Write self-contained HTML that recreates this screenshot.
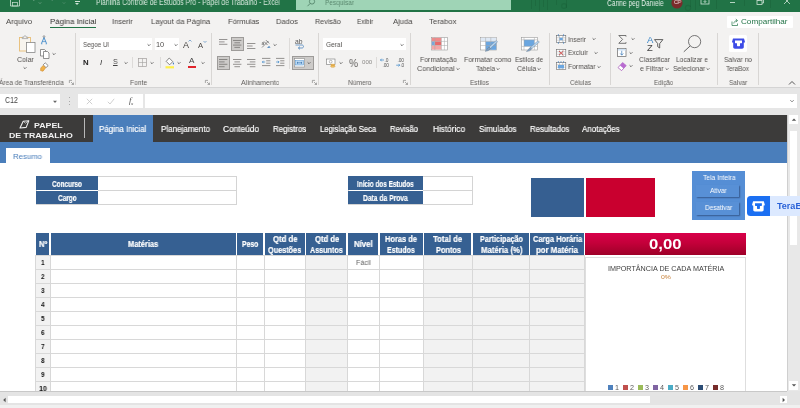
<!DOCTYPE html>
<html>
<head>
<meta charset="utf-8">
<title>Excel</title>
<style>
html,body{margin:0;padding:0;}
body{width:800px;height:408px;overflow:hidden;position:relative;background:#fff;font-family:"Liberation Sans",sans-serif;color:#444;}
div,span{box-sizing:border-box;}
.a{position:absolute;}
.t{position:absolute;white-space:nowrap;line-height:1;will-change:transform;}
svg{overflow:visible;}
</style>
</head>
<body>
<div class="a" style="left:0.00px;top:0.00px;width:800.00px;height:12.30px;background:#217346;"></div>
<div class="a" style="left:296.25px;top:0.00px;width:215.00px;height:9.50px;background:#9fd4b6;"></div>
<div class="a" style="left:0.00px;top:12.30px;width:800.00px;height:75.20px;background:#f3f2f1;"></div>
<div class="a" style="left:0.00px;top:87.50px;width:800.00px;height:27.00px;background:#e6e6e6;"></div>
<div class="a" style="left:0.00px;top:87.00px;width:800.00px;height:1.00px;background:#d4d4d4;"></div>
<div class="a" style="left:0.00px;top:114.70px;width:786.60px;height:27.80px;background:#3c3b3a;"></div>
<div class="a" style="left:0.00px;top:142.40px;width:786.60px;height:20.30px;background:#4a7ebb;"></div>
<div class="a" style="left:93.00px;top:114.70px;width:60.00px;height:28.30px;background:#4a7ebb;"></div>
<div class="a" style="left:5.50px;top:148.00px;width:44.00px;height:15.20px;background:#ffffff;"></div>
<div class="a" style="left:531.00px;top:0.00px;width:1.20px;height:9.00px;background:rgba(10,60,30,0.16);"></div>
<div class="a" style="left:535.00px;top:0.00px;width:1.20px;height:6.00px;background:rgba(10,60,30,0.16);"></div>
<div class="a" style="left:539.00px;top:0.00px;width:1.20px;height:11.00px;background:rgba(10,60,30,0.16);"></div>
<div class="a" style="left:543.00px;top:0.00px;width:1.20px;height:7.00px;background:rgba(10,60,30,0.16);"></div>
<div class="a" style="left:547.00px;top:0.00px;width:1.20px;height:10.00px;background:rgba(10,60,30,0.16);"></div>
<div class="a" style="left:556.00px;top:0.00px;width:1.20px;height:5.00px;background:rgba(10,60,30,0.16);"></div>
<div class="a" style="left:566.00px;top:0.00px;width:1.20px;height:8.00px;background:rgba(10,60,30,0.16);"></div>
<div class="a" style="left:690.00px;top:0.00px;width:1.20px;height:7.00px;background:rgba(10,60,30,0.16);"></div>
<div class="a" style="left:694.50px;top:0.00px;width:1.20px;height:10.00px;background:rgba(10,60,30,0.16);"></div>
<div class="a" style="left:699.00px;top:0.00px;width:1.20px;height:6.00px;background:rgba(10,60,30,0.16);"></div>
<div class="a" style="left:716.00px;top:0.00px;width:1.20px;height:9.00px;background:rgba(10,60,30,0.16);"></div>
<div class="a" style="left:744.00px;top:0.00px;width:1.20px;height:6.00px;background:rgba(10,60,30,0.16);"></div>
<div class="a" style="left:770.00px;top:0.00px;width:1.20px;height:8.00px;background:rgba(10,60,30,0.16);"></div>
<svg class="a" style="left:684.00px;top:4.00px;" width="8" height="8" viewBox="0 0 8 8"><circle cx="4" cy="4" r="2.6" fill="none" stroke="rgba(10,60,30,0.16)" stroke-width="1.1"/></svg>
<svg class="a" style="left:560.00px;top:2.00px;" width="8" height="8" viewBox="0 0 8 8"><circle cx="4" cy="4" r="2.4" fill="none" stroke="rgba(10,60,30,0.14)" stroke-width="1.1"/></svg>
<div class="t" style="left:95.75px;top:-0.70px;font-size:8.20px;color:#d7e8dd;transform:scaleX(0.8299);transform-origin:0 0;">Planilha Controle de Estudos Pro - Papel de Trabalho  -  Excel</div>
<div class="t" style="left:325.00px;top:-0.70px;font-size:8.00px;color:#5c8a70;transform:scaleX(0.8152);transform-origin:0 0;">Pesquisar</div>
<svg class="a" style="left:306.00px;top:-2.00px;" width="10" height="10" viewBox="0 0 10 10"><circle cx="6" cy="3.5" r="2.6" fill="none" stroke="#4d7c63" stroke-width="0.8"/><path d="M4.2 5.4 L1.5 8.2" stroke="#4d7c63" stroke-width="0.8"/></svg>
<div class="t" style="left:607.00px;top:-0.50px;font-size:8.20px;color:#e6f0ea;transform:scaleX(0.8084);transform-origin:0 0;">Carine peg Daniele</div>
<svg class="a" style="left:671.30px;top:-3.40px;" width="12" height="12" viewBox="0 0 12 12"><circle cx="6" cy="6" r="5.6" fill="#7a2b2b"/></svg>
<div class="t" style="left:673.80px;top:0.20px;font-size:5.60px;color:#f3e4e4;transform:scaleX(0.9255);transform-origin:0 0;">CP</div>
<svg class="a" style="left:700.00px;top:-0.60px;" width="10" height="8" viewBox="0 0 10 8"><rect x="1" y="-1" width="8" height="6" fill="none" stroke="#cfe3d6" stroke-width="0.8"/><path d="M5 0 L5 3.4 M3.6 2 L5 3.6 L6.4 2" stroke="#cfe3d6" stroke-width="0.7" fill="none"/></svg>
<div class="a" style="left:729.60px;top:2.20px;width:5.40px;height:0.70px;background:#b5d4c2;"></div>
<svg class="a" style="left:755.00px;top:-0.40px;" width="10" height="8" viewBox="0 0 10 8"><rect x="2" y="0.5" width="5" height="4" fill="none" stroke="#cfe3d6" stroke-width="0.8"/><path d="M3.5 0.5 L3.5 -1 L8.5 -1 L8.5 3 L7 3" fill="none" stroke="#cfe3d6" stroke-width="0.8"/></svg>
<svg class="a" style="left:781.70px;top:-0.60px;" width="10" height="8" viewBox="0 0 10 8"><path d="M2 -1 L8 5 M8 -1 L2 5" stroke="#cfe3d6" stroke-width="0.8"/></svg>
<svg class="a" style="left:10.00px;top:-3.00px;" width="10" height="10" viewBox="0 0 10 10"><path d="M0.5 0 H8 L9.5 1.5 V9 H0.5 Z" fill="none" stroke="#cfe3d6" stroke-width="0.8"/><rect x="2.5" y="5.5" width="5" height="3.5" fill="none" stroke="#cfe3d6" stroke-width="0.7"/></svg>
<svg class="a" style="left:26.00px;top:-3.00px;" width="10" height="8" viewBox="0 0 10 8"><path d="M1 3 C3 0,7 0,8 4" fill="none" stroke="#7fae93" stroke-width="0.8"/></svg>
<svg class="a" style="left:37.00px;top:0.00px;" width="6" height="6" viewBox="0 0 6 6"><path d="M1.8 2.4 L3 3.6 L4.2 2.4" fill="none" stroke="#7fae93" stroke-width="0.7"/></svg>
<svg class="a" style="left:50.00px;top:-3.00px;" width="10" height="8" viewBox="0 0 10 8"><path d="M9 3 C7 0,3 0,2 4" fill="none" stroke="#5f977a" stroke-width="0.8"/></svg>
<svg class="a" style="left:61.00px;top:0.00px;" width="6" height="6" viewBox="0 0 6 6"><path d="M1.8 2.4 L3 3.6 L4.2 2.4" fill="none" stroke="#5f977a" stroke-width="0.7"/></svg>
<div class="a" style="left:74.50px;top:1.20px;width:5.00px;height:0.80px;background:#cfe3d6;"></div>
<svg class="a" style="left:74.00px;top:2.00px;" width="6" height="4" viewBox="0 0 6 4"><path d="M1 1 L3 3 L5 1 Z" fill="#cfe3d6"/></svg>
<div class="t" style="left:6.00px;top:18.40px;font-size:8.00px;color:#484644;transform:scaleX(0.9585);transform-origin:0 0;">Arquivo</div>
<div class="t" style="left:49.50px;top:18.40px;font-size:8.00px;color:#323130;transform:scaleX(0.9771);transform-origin:0 0;">Página Inicial</div>
<div class="a" style="left:49.50px;top:27.00px;width:46.50px;height:1.30px;background:#217346;"></div>
<div class="t" style="left:112.25px;top:18.40px;font-size:8.00px;color:#484644;transform:scaleX(0.9335);transform-origin:0 0;">Inserir</div>
<div class="t" style="left:150.75px;top:18.40px;font-size:8.00px;color:#484644;transform:scaleX(0.9514);transform-origin:0 0;">Layout da Página</div>
<div class="t" style="left:228.00px;top:18.40px;font-size:8.00px;color:#484644;transform:scaleX(0.9373);transform-origin:0 0;">Fórmulas</div>
<div class="t" style="left:276.25px;top:18.40px;font-size:8.00px;color:#484644;transform:scaleX(0.9405);transform-origin:0 0;">Dados</div>
<div class="t" style="left:314.50px;top:18.40px;font-size:8.00px;color:#484644;transform:scaleX(0.8909);transform-origin:0 0;">Revisão</div>
<div class="t" style="left:357.00px;top:18.40px;font-size:8.00px;color:#484644;transform:scaleX(0.8123);transform-origin:0 0;">Exibir</div>
<div class="t" style="left:392.50px;top:18.40px;font-size:8.00px;color:#484644;transform:scaleX(0.9530);transform-origin:0 0;">Ajuda</div>
<div class="t" style="left:428.75px;top:18.40px;font-size:8.00px;color:#484644;transform:scaleX(0.9662);transform-origin:0 0;">Terabox</div>
<div class="a" style="left:727.40px;top:16.00px;width:65.60px;height:11.60px;background:#ffffff;border-radius:1px;"></div>
<div class="t" style="left:740.50px;top:18.30px;font-size:7.80px;color:#217346;transform:scaleX(1.0414);transform-origin:0 0;">Compartilhar</div>
<svg class="a" style="left:730.50px;top:17.50px;" width="8" height="8" viewBox="0 0 8 8"><path d="M1 3.5 V7.5 H6.5 V5.5" fill="none" stroke="#217346" stroke-width="0.7"/><path d="M2.8 5.5 C3 3.5,4.5 2.6,6 2.6 M4.8 1 L6.6 2.6 L4.8 4.2" fill="none" stroke="#217346" stroke-width="0.7"/></svg>
<div class="t" style="left:-1.00px;top:78.80px;font-size:7.20px;color:#605e5c;transform:scaleX(0.9175);transform-origin:0 0;">Área de Transferência</div>
<svg class="a" style="left:68.50px;top:80.00px;" width="5" height="5" viewBox="0 0 5 5"><path d="M0.4 3 V0.4 H3" fill="none" stroke="#777" stroke-width="0.6"/><path d="M2 2 L4.4 4.4 M4.5 2.6 V4.5 H2.6" fill="none" stroke="#777" stroke-width="0.6"/></svg>
<div class="a" style="left:74.60px;top:32.50px;width:0.80px;height:52.50px;background:#d8d6d4;"></div>
<div class="t" style="left:130.00px;top:78.80px;font-size:7.20px;color:#605e5c;transform:scaleX(0.9233);transform-origin:0 0;">Fonte</div>
<svg class="a" style="left:204.50px;top:80.00px;" width="5" height="5" viewBox="0 0 5 5"><path d="M0.4 3 V0.4 H3" fill="none" stroke="#777" stroke-width="0.6"/><path d="M2 2 L4.4 4.4 M4.5 2.6 V4.5 H2.6" fill="none" stroke="#777" stroke-width="0.6"/></svg>
<div class="a" style="left:211.35px;top:32.50px;width:0.80px;height:52.50px;background:#d8d6d4;"></div>
<div class="t" style="left:240.75px;top:78.80px;font-size:7.20px;color:#605e5c;transform:scaleX(0.9619);transform-origin:0 0;">Alinhamento</div>
<svg class="a" style="left:311.50px;top:80.00px;" width="5" height="5" viewBox="0 0 5 5"><path d="M0.4 3 V0.4 H3" fill="none" stroke="#777" stroke-width="0.6"/><path d="M2 2 L4.4 4.4 M4.5 2.6 V4.5 H2.6" fill="none" stroke="#777" stroke-width="0.6"/></svg>
<div class="a" style="left:317.60px;top:32.50px;width:0.80px;height:52.50px;background:#d8d6d4;"></div>
<div class="t" style="left:348.00px;top:78.80px;font-size:7.20px;color:#605e5c;transform:scaleX(0.9176);transform-origin:0 0;">Número</div>
<svg class="a" style="left:403.00px;top:80.00px;" width="5" height="5" viewBox="0 0 5 5"><path d="M0.4 3 V0.4 H3" fill="none" stroke="#777" stroke-width="0.6"/><path d="M2 2 L4.4 4.4 M4.5 2.6 V4.5 H2.6" fill="none" stroke="#777" stroke-width="0.6"/></svg>
<div class="a" style="left:410.10px;top:32.50px;width:0.80px;height:52.50px;background:#d8d6d4;"></div>
<div class="t" style="left:470.00px;top:78.80px;font-size:7.20px;color:#605e5c;transform:scaleX(0.8959);transform-origin:0 0;">Estilos</div>
<div class="a" style="left:548.60px;top:32.50px;width:0.80px;height:52.50px;background:#d8d6d4;"></div>
<div class="t" style="left:569.50px;top:78.80px;font-size:7.20px;color:#605e5c;transform:scaleX(0.8745);transform-origin:0 0;">Células</div>
<div class="a" style="left:609.60px;top:32.50px;width:0.80px;height:52.50px;background:#d8d6d4;"></div>
<div class="t" style="left:653.75px;top:78.80px;font-size:7.20px;color:#605e5c;transform:scaleX(0.8744);transform-origin:0 0;">Edição</div>
<div class="a" style="left:717.10px;top:32.50px;width:0.80px;height:52.50px;background:#d8d6d4;"></div>
<div class="t" style="left:728.75px;top:78.80px;font-size:7.20px;color:#605e5c;transform:scaleX(0.8942);transform-origin:0 0;">Salvar</div>
<div class="a" style="left:757.60px;top:32.50px;width:0.80px;height:52.50px;background:#d8d6d4;"></div>
<svg class="a" style="left:788.00px;top:80.00px;" width="8" height="6" viewBox="0 0 8 6"><path d="M1 4.5 L4 1.5 L7 4.5" fill="none" stroke="#444" stroke-width="0.9"/></svg>
<svg class="a" style="left:19.00px;top:35.00px;" width="17" height="18" viewBox="0 0 17 18"><rect x="0.5" y="2.5" width="11" height="13.5" fill="#f7f4ee" stroke="#e8bd74" stroke-width="0.9"/><path d="M3.2 3.6 V2.2 H4.8 C4.8 0.2,7.2 0.2,7.2 2.2 H8.8 V3.6 Z" fill="#f3f2f1" stroke="#8a8a8a" stroke-width="0.6"/><rect x="7.5" y="7.5" width="8.5" height="10" fill="#fff" stroke="#808080" stroke-width="0.75"/></svg>
<div class="t" style="left:17.00px;top:56.10px;font-size:7.60px;color:#53504e;transform:scaleX(0.9222);transform-origin:0 0;">Colar</div>
<svg class="a" style="left:21.50px;top:64.50px;" width="6" height="6" viewBox="0 0 6 6"><path d="M1.6 2.3 L3 3.7 L4.4 2.3" fill="none" stroke="#555" stroke-width="0.85"/></svg>
<svg class="a" style="left:40.00px;top:34.50px;" width="8" height="10" viewBox="0 0 8 10"><circle cx="4" cy="1.6" r="0.9" fill="none" stroke="#666" stroke-width="0.6"/><path d="M4 2.6 L1.4 8.6 M4 2.6 L6.6 8.6" stroke="#3a86c8" stroke-width="0.9" fill="none"/><path d="M2.2 6.6 H5.8" stroke="#3a86c8" stroke-width="0.7"/><path d="M1.2 8.8 H2.4 M5.6 8.8 H6.8" stroke="#3a86c8" stroke-width="0.8"/></svg>
<svg class="a" style="left:39.50px;top:48.50px;" width="10" height="10" viewBox="0 0 10 10"><path d="M0.5 0.5 H4.5 L6 2 V7 H0.5 Z" fill="#fff" stroke="#666" stroke-width="0.7"/><path d="M3.5 2.5 H7.5 L9 4 V9.5 H3.5 Z" fill="#fff" stroke="#666" stroke-width="0.7"/></svg>
<svg class="a" style="left:51.30px;top:50.50px;" width="6" height="6" viewBox="0 0 6 6"><path d="M1.6 2.3 L3 3.7 L4.4 2.3" fill="none" stroke="#555" stroke-width="0.85"/></svg>
<svg class="a" style="left:40.00px;top:62.00px;" width="9" height="10" viewBox="0 0 9 10"><path d="M5.2 0.8 L8.2 3.6 L6 5.6 L3.2 2.8 Z" fill="#fff" stroke="#666" stroke-width="0.7"/><path d="M3.2 3.4 L5.6 5.8 L3 9.2 L0.6 8.6 L0.8 6 Z" fill="#f0b24a" stroke="#d08a2a" stroke-width="0.6"/></svg>
<div class="a" style="left:80.40px;top:37.60px;width:72.00px;height:12.60px;background:#fff;"></div>
<div class="t" style="left:82.50px;top:41.00px;font-size:7.40px;color:#53504e;transform:scaleX(0.8508);transform-origin:0 0;">Segoe UI</div>
<svg class="a" style="left:146.00px;top:41.60px;" width="6" height="6" viewBox="0 0 6 6"><path d="M1.6 2.3 L3 3.7 L4.4 2.3" fill="none" stroke="#555" stroke-width="0.85"/></svg>
<div class="a" style="left:154.60px;top:37.60px;width:24.40px;height:12.60px;background:#fff;"></div>
<div class="t" style="left:155.60px;top:41.00px;font-size:7.40px;color:#53504e;transform:scaleX(0.9476);transform-origin:0 0;">10</div>
<svg class="a" style="left:172.50px;top:41.60px;" width="6" height="6" viewBox="0 0 6 6"><path d="M1.6 2.3 L3 3.7 L4.4 2.3" fill="none" stroke="#555" stroke-width="0.85"/></svg>
<div class="t" style="left:182.50px;top:40.70px;font-size:9.00px;color:#484644;transform:scaleX(0.9995);transform-origin:0 0;">A</div>
<svg class="a" style="left:188.00px;top:39.00px;" width="4" height="4" viewBox="0 0 4 4"><path d="M0.5 2.5 L2 1 L3.5 2.5" fill="none" stroke="#3a78b8" stroke-width="0.6"/></svg>
<div class="t" style="left:198.00px;top:42.00px;font-size:7.60px;color:#484644;transform:scaleX(0.9863);transform-origin:0 0;">A</div>
<svg class="a" style="left:202.50px;top:39.50px;" width="4" height="4" viewBox="0 0 4 4"><path d="M0.5 1 L2 2.5 L3.5 1" fill="none" stroke="#3a78b8" stroke-width="0.6"/></svg>
<div class="t" style="left:83.20px;top:58.50px;font-size:7.80px;color:#222;transform:scaleX(0.9941);transform-origin:0 0;font-weight:bold;">N</div>
<div class="t" style="left:99.80px;top:58.50px;font-size:7.80px;color:#333;transform:scaleX(0.9230);transform-origin:0 0;font-style:italic;">I</div>
<div class="t" style="left:112.80px;top:58.40px;font-size:7.60px;color:#444;transform:scaleX(0.9074);transform-origin:0 0;text-decoration:underline;">S</div>
<svg class="a" style="left:122.50px;top:59.50px;" width="6" height="6" viewBox="0 0 6 6"><path d="M1.6 2.3 L3 3.7 L4.4 2.3" fill="none" stroke="#555" stroke-width="0.85"/></svg>
<div class="a" style="left:131.50px;top:56.50px;width:0.80px;height:11.50px;background:#dddbd9;"></div>
<svg class="a" style="left:137.50px;top:58.00px;" width="9" height="9" viewBox="0 0 9 9"><rect x="0.5" y="0.5" width="8" height="8" fill="none" stroke="#a19f9d" stroke-width="0.7"/><path d="M4.5 0.5 V8.5 M0.5 4.5 H8.5" stroke="#a19f9d" stroke-width="0.6"/></svg>
<svg class="a" style="left:149.30px;top:59.50px;" width="6" height="6" viewBox="0 0 6 6"><path d="M1.6 2.3 L3 3.7 L4.4 2.3" fill="none" stroke="#555" stroke-width="0.85"/></svg>
<div class="a" style="left:159.60px;top:56.50px;width:0.80px;height:11.50px;background:#dddbd9;"></div>
<svg class="a" style="left:165.00px;top:56.50px;" width="10" height="12" viewBox="0 0 10 12"><path d="M4.2 1 L7.8 4.6 L4.6 7.8 L1.2 4.4 Z" fill="#fff" stroke="#555" stroke-width="0.7"/><path d="M8.4 5.2 C9.2 6.4,9.2 7.2,8.4 7.4 C7.6 7.2,7.6 6.4,8.4 5.2Z" fill="#3a78b8"/><rect x="0.5" y="9.2" width="8.5" height="2.2" fill="#fff04a"/></svg>
<svg class="a" style="left:176.30px;top:59.50px;" width="6" height="6" viewBox="0 0 6 6"><path d="M1.6 2.3 L3 3.7 L4.4 2.3" fill="none" stroke="#555" stroke-width="0.85"/></svg>
<div class="t" style="left:189.40px;top:57.00px;font-size:8.00px;color:#444;transform:scaleX(1.0119);transform-origin:0 0;">A</div>
<div class="a" style="left:187.80px;top:65.60px;width:8.60px;height:2.00px;background:#e0242b;"></div>
<svg class="a" style="left:199.70px;top:59.50px;" width="6" height="6" viewBox="0 0 6 6"><path d="M1.6 2.3 L3 3.7 L4.4 2.3" fill="none" stroke="#555" stroke-width="0.85"/></svg>
<svg class="a" style="left:218.80px;top:39.30px;" width="8.4" height="7.2" viewBox="0 0 8.4 7.2"><path d="M0 0.5 H8.4" stroke="#6a6866" stroke-width="0.7"/><path d="M0 2.9 H5.6" stroke="#6a6866" stroke-width="0.7"/><path d="M0 5.3 H8.4" stroke="#6a6866" stroke-width="0.7"/></svg>
<div class="a" style="left:231.00px;top:37.00px;width:13.00px;height:13.60px;background:#cdcbc9;border:0.7px solid #9d9b99;"></div>
<svg class="a" style="left:233.30px;top:40.30px;" width="8.4" height="9.2" viewBox="0 0 8.4 9.2"><path d="M0 0.5 H8.4" stroke="#6a6866" stroke-width="0.7"/><path d="M1.4 2.8 H7" stroke="#6a6866" stroke-width="0.7"/><path d="M0 5.1 H8.4" stroke="#6a6866" stroke-width="0.7"/><path d="M1.4 7.4 H7" stroke="#6a6866" stroke-width="0.7"/></svg>
<svg class="a" style="left:247.20px;top:42.80px;" width="8.4" height="7.5" viewBox="0 0 8.4 7.5"><path d="M0 0.5 H8.4" stroke="#6a6866" stroke-width="0.7"/><path d="M0 3 H5.6" stroke="#6a6866" stroke-width="0.7"/><path d="M0 5.5 H8.4" stroke="#6a6866" stroke-width="0.7"/></svg>
<svg class="a" style="left:261.00px;top:38.50px;" width="11" height="11" viewBox="0 0 11 11"><path d="M1 8.5 L7.5 2" stroke="#666" stroke-width="0.7"/><path d="M3 2.5 L6.5 6 M5 1.2 L8.2 4.4" stroke="#555" stroke-width="0.7"/><path d="M6 9 L9.6 8.6 L8 7 Z" fill="#3a78b8"/><text x="0.5" y="6" font-size="5" fill="#555" font-family="Liberation Sans">a</text></svg>
<svg class="a" style="left:272.00px;top:41.60px;" width="6" height="6" viewBox="0 0 6 6"><path d="M1.6 2.3 L3 3.7 L4.4 2.3" fill="none" stroke="#555" stroke-width="0.85"/></svg>
<div class="a" style="left:288.60px;top:37.50px;width:0.80px;height:31.50px;background:#dddbd9;"></div>
<div class="t" style="left:295.00px;top:38.60px;font-size:6.40px;color:#555;transform:scaleX(1.0535);transform-origin:0 0;">ab</div>
<svg class="a" style="left:294.50px;top:44.00px;" width="10" height="5" viewBox="0 0 10 5"><path d="M0.5 1 H7 C9 1,9 4,7 4 H3.5 M5 2.6 L3.3 4 L5 5.4" fill="none" stroke="#3a78b8" stroke-width="0.7"/></svg>
<div class="a" style="left:217.00px;top:56.00px;width:12.80px;height:13.60px;background:#cdcbc9;border:0.7px solid #9d9b99;"></div>
<svg class="a" style="left:219.20px;top:58.60px;" width="8.4" height="9.6" viewBox="0 0 8.4 9.6"><path d="M0 0.5 H8.4" stroke="#6a6866" stroke-width="0.7"/><path d="M0 2.9 H5.6" stroke="#6a6866" stroke-width="0.7"/><path d="M0 5.3 H8.4" stroke="#6a6866" stroke-width="0.7"/><path d="M0 7.7 H5.6" stroke="#6a6866" stroke-width="0.7"/></svg>
<svg class="a" style="left:233.00px;top:58.60px;" width="8.4" height="9.6" viewBox="0 0 8.4 9.6"><path d="M0 0.5 H8.4" stroke="#6a6866" stroke-width="0.7"/><path d="M1.4 2.9 H7" stroke="#6a6866" stroke-width="0.7"/><path d="M0 5.3 H8.4" stroke="#6a6866" stroke-width="0.7"/><path d="M1.4 7.7 H7" stroke="#6a6866" stroke-width="0.7"/></svg>
<svg class="a" style="left:247.00px;top:58.60px;" width="8.4" height="9.6" viewBox="0 0 8.4 9.6"><path d="M0 0.5 H8.4" stroke="#6a6866" stroke-width="0.7"/><path d="M2.8 2.9 H8.4" stroke="#6a6866" stroke-width="0.7"/><path d="M0 5.3 H8.4" stroke="#6a6866" stroke-width="0.7"/><path d="M2.8 7.7 H8.4" stroke="#6a6866" stroke-width="0.7"/></svg>
<svg class="a" style="left:261.60px;top:58.40px;" width="8.6" height="8" viewBox="0 0 8.6 8"><path d="M0 0.4 H8.4 M4.2 2.8 H8.4 M4.2 5.2 H8.4 M0 7.6 H8.4" stroke="#6a6866" stroke-width="0.7"/><path d="M3.2 4 H0.3 M1.5 2.8 L0.3 4 L1.5 5.2" fill="none" stroke="#3a86c8" stroke-width="0.7"/></svg>
<svg class="a" style="left:276.00px;top:58.40px;" width="8.6" height="8" viewBox="0 0 8.6 8"><path d="M0 0.4 H8.4 M4.2 2.8 H8.4 M4.2 5.2 H8.4 M0 7.6 H8.4" stroke="#6a6866" stroke-width="0.7"/><path d="M0.1 4 H3.1 M1.9 2.8 L3.1 4 L1.9 5.2" fill="none" stroke="#3a86c8" stroke-width="0.7"/></svg>
<div class="a" style="left:292.00px;top:56.00px;width:22.00px;height:13.60px;background:#cdcbc9;border:0.7px solid #9d9b99;"></div>
<svg class="a" style="left:293.50px;top:58.00px;" width="11" height="9.5" viewBox="0 0 11 9.5"><rect x="0.5" y="0.5" width="10" height="8.5" fill="#fff" stroke="#8a8a8a" stroke-width="0.6"/><rect x="1.4" y="2.6" width="8.2" height="4.4" fill="#bcd9f2" stroke="#4a90d0" stroke-width="0.5"/><path d="M3 4.8 H8 M4 3.9 L3 4.8 L4 5.7 M7 3.9 L8 4.8 L7 5.7" fill="none" stroke="#2b68a8" stroke-width="0.6"/></svg>
<svg class="a" style="left:305.80px;top:59.80px;" width="6" height="6" viewBox="0 0 6 6"><path d="M1.6 2.3 L3 3.7 L4.4 2.3" fill="none" stroke="#555" stroke-width="0.85"/></svg>
<div class="a" style="left:323.00px;top:37.60px;width:82.50px;height:12.60px;background:#fff;"></div>
<div class="t" style="left:325.75px;top:41.00px;font-size:7.40px;color:#53504e;transform:scaleX(0.8842);transform-origin:0 0;">Geral</div>
<svg class="a" style="left:399.30px;top:41.60px;" width="6" height="6" viewBox="0 0 6 6"><path d="M1.6 2.3 L3 3.7 L4.4 2.3" fill="none" stroke="#555" stroke-width="0.85"/></svg>
<svg class="a" style="left:325.50px;top:58.00px;" width="10" height="10" viewBox="0 0 10 10"><rect x="0.5" y="1" width="8.5" height="5.5" fill="#fff" stroke="#777" stroke-width="0.6"/><circle cx="4.7" cy="3.7" r="1.4" fill="none" stroke="#777" stroke-width="0.5"/><ellipse cx="6.8" cy="7" rx="2.2" ry="0.9" fill="#f3c46a" stroke="#c98a20" stroke-width="0.4"/><ellipse cx="6.8" cy="8.4" rx="2.2" ry="0.9" fill="#f3c46a" stroke="#c98a20" stroke-width="0.4"/></svg>
<svg class="a" style="left:337.50px;top:59.80px;" width="6" height="6" viewBox="0 0 6 6"><path d="M1.6 2.3 L3 3.7 L4.4 2.3" fill="none" stroke="#555" stroke-width="0.85"/></svg>
<div class="t" style="left:348.60px;top:56.80px;font-size:11.60px;color:#605e5c;transform:scaleX(0.8726);transform-origin:0 0;">%</div>
<div class="t" style="left:362.40px;top:60.30px;font-size:5.80px;color:#8a8886;transform:scaleX(1.0540);transform-origin:0 0;">000</div>
<div class="a" style="left:375.60px;top:56.50px;width:0.80px;height:11.50px;background:#dddbd9;"></div>
<svg class="a" style="left:380.00px;top:57.60px;" width="10" height="10" viewBox="0 0 10 10"><path d="M4 2 H0.4 M1.7 0.7 L0.4 2 L1.7 3.3" fill="none" stroke="#3a86c8" stroke-width="0.7"/><text x="4.6" y="3.9" font-size="4.8" fill="#555" font-family="Liberation Sans" letter-spacing="-0.2">.0</text><text x="2.6" y="9" font-size="4.8" fill="#555" font-family="Liberation Sans" letter-spacing="-0.2">.00</text></svg>
<svg class="a" style="left:395.60px;top:57.60px;" width="10" height="10" viewBox="0 0 10 10"><path d="M0.2 7.2 H3.8 M2.5 5.9 L3.8 7.2 L2.5 8.5" fill="none" stroke="#3a86c8" stroke-width="0.7"/><text x="1.6" y="3.9" font-size="4.8" fill="#555" font-family="Liberation Sans" letter-spacing="-0.2">.00</text><text x="4.4" y="9" font-size="4.8" fill="#555" font-family="Liberation Sans" letter-spacing="-0.2">.0</text></svg>
<svg class="a" style="left:430.50px;top:37.00px;" width="17" height="13.5" viewBox="0 0 17 13.5"><rect x="0.4" y="0.4" width="16" height="12.6" fill="#fff" stroke="#9a9a9a" stroke-width="0.6"/><rect x="0.8" y="0.8" width="9.5" height="3.6" fill="#f08a8a"/><rect x="3.8" y="4.4" width="6.5" height="4" fill="#e86a6a"/><rect x="0.8" y="4.4" width="3" height="4" fill="#7aa7d8"/><rect x="0.8" y="8.6" width="9.5" height="4" fill="#f4a6a6"/><path d="M0.4 4.4 H16.4 M0.4 8.5 H16.4 M3.8 0.4 V13 M10.4 0.4 V13 M13.4 0.4 V13" stroke="#a6a6a6" stroke-width="0.5"/></svg>
<div class="t" style="left:420.00px;top:56.10px;font-size:7.60px;color:#53504e;transform:scaleX(0.9124);transform-origin:0 0;">Formatação</div>
<div class="t" style="left:416.75px;top:64.85px;font-size:7.60px;color:#53504e;transform:scaleX(0.9505);transform-origin:0 0;">Condicional</div>
<svg class="a" style="left:454.80px;top:65.80px;" width="6" height="6" viewBox="0 0 6 6"><path d="M1.6 2.3 L3 3.7 L4.4 2.3" fill="none" stroke="#555" stroke-width="0.85"/></svg>
<svg class="a" style="left:479.50px;top:37.00px;" width="17" height="13.5" viewBox="0 0 17 13.5"><rect x="0.4" y="0.4" width="16" height="12.6" fill="#fff" stroke="#9a9a9a" stroke-width="0.6"/><rect x="5.6" y="4.4" width="10.6" height="8.4" fill="#6aa6e0"/><rect x="0.8" y="0.8" width="15.4" height="3.4" fill="#dfe9f5"/><path d="M0.4 4.4 H16.4 M0.4 8.5 H16.4 M5.6 0.4 V13 M10.8 0.4 V13" stroke="#a6a6a6" stroke-width="0.5"/><path d="M16.2 3.6 L17.6 4.8 L10.4 11.4 L9 10 Z" fill="#b4d4f0" stroke="#6f8296" stroke-width="0.45"/><path d="M9 10 L10.4 11.4 C9.6 13.2,7.4 14.4,5 14.2 C6.6 13.4,7 11.4,9 10 Z" fill="#7f9fc0" stroke="#5f7890" stroke-width="0.4"/></svg>
<div class="t" style="left:463.75px;top:56.10px;font-size:7.60px;color:#53504e;transform:scaleX(0.9219);transform-origin:0 0;">Formatar como</div>
<div class="t" style="left:475.50px;top:64.85px;font-size:7.60px;color:#53504e;transform:scaleX(0.8484);transform-origin:0 0;">Tabela</div>
<svg class="a" style="left:494.50px;top:65.80px;" width="6" height="6" viewBox="0 0 6 6"><path d="M1.6 2.3 L3 3.7 L4.4 2.3" fill="none" stroke="#555" stroke-width="0.85"/></svg>
<svg class="a" style="left:521.00px;top:37.00px;" width="17" height="13.5" viewBox="0 0 17 13.5"><rect x="0.4" y="0.4" width="16" height="12.6" fill="#fff" stroke="#9a9a9a" stroke-width="0.6"/><rect x="3" y="2.8" width="10.4" height="6.6" fill="#6aa6e0"/><path d="M0.4 2.8 H16.4 M0.4 9.4 H16.4 M3 0.4 V13 M13.4 0.4 V13" stroke="#a6a6a6" stroke-width="0.5"/><path d="M17 3.8 L18.4 5 L10.8 11.6 L9.4 10.2 Z" fill="#b4d4f0" stroke="#6f8296" stroke-width="0.45"/><path d="M9.4 10.2 L10.8 11.6 C10 13.4,7.8 14.6,5.4 14.4 C7 13.6,7.4 11.6,9.4 10.2 Z" fill="#7f9fc0" stroke="#5f7890" stroke-width="0.4"/></svg>
<div class="t" style="left:515.00px;top:56.10px;font-size:7.60px;color:#53504e;transform:scaleX(0.8574);transform-origin:0 0;">Estilos de</div>
<div class="t" style="left:516.75px;top:64.85px;font-size:7.60px;color:#53504e;transform:scaleX(0.8934);transform-origin:0 0;">Célula</div>
<svg class="a" style="left:536.00px;top:65.80px;" width="6" height="6" viewBox="0 0 6 6"><path d="M1.6 2.3 L3 3.7 L4.4 2.3" fill="none" stroke="#555" stroke-width="0.85"/></svg>
<svg class="a" style="left:555.80px;top:33.75px;" width="10.2" height="10" viewBox="0 0 10.2 10"><rect x="0.4" y="1.4" width="9.4" height="7.2" fill="#fff" stroke="#6a6a6a" stroke-width="0.6"/><path d="M0.4 3.8 H9.8 M0.4 6.2 H9.8 M3.5 1.4 V8.6 M6.7 1.4 V8.6" stroke="#8a8a8a" stroke-width="0.4"/><rect x="3.5" y="3.8" width="3.2" height="2.4" fill="#6aa6e0"/><path d="M2.4 0 V2.4 M7.6 0 V2.4 M2.4 7.8 V10 M7.6 7.8 V10" stroke="#3a78b8" stroke-width="0.6"/></svg>
<div class="t" style="left:568.00px;top:35.50px;font-size:7.60px;color:#53504e;transform:scaleX(0.8524);transform-origin:0 0;">Inserir</div>
<svg class="a" style="left:590.75px;top:36.20px;" width="6" height="6" viewBox="0 0 6 6"><path d="M1.6 2.3 L3 3.7 L4.4 2.3" fill="none" stroke="#555" stroke-width="0.85"/></svg>
<svg class="a" style="left:555.80px;top:47.50px;" width="10.2" height="10" viewBox="0 0 10.2 10"><rect x="0.4" y="1.4" width="9.4" height="7.2" fill="#fff" stroke="#6a6a6a" stroke-width="0.6"/><path d="M0.4 3.8 H9.8 M0.4 6.2 H9.8 M3.5 1.4 V8.6 M6.7 1.4 V8.6" stroke="#8a8a8a" stroke-width="0.4"/><path d="M3 3 L7.4 7.2 M7.4 3 L3 7.2" stroke="#d04a4a" stroke-width="0.9"/></svg>
<div class="t" style="left:568.00px;top:49.20px;font-size:7.60px;color:#53504e;transform:scaleX(0.8770);transform-origin:0 0;">Excluir</div>
<svg class="a" style="left:592.75px;top:50.00px;" width="6" height="6" viewBox="0 0 6 6"><path d="M1.6 2.3 L3 3.7 L4.4 2.3" fill="none" stroke="#555" stroke-width="0.85"/></svg>
<svg class="a" style="left:555.80px;top:61.00px;" width="10.2" height="10" viewBox="0 0 10.2 10"><rect x="0.4" y="1.4" width="9.4" height="7.2" fill="#fff" stroke="#6a6a6a" stroke-width="0.6"/><path d="M0.4 3.8 H9.8 M0.4 6.2 H9.8 M3.5 1.4 V8.6 M6.7 1.4 V8.6" stroke="#8a8a8a" stroke-width="0.4"/><rect x="2" y="4" width="6" height="3.4" fill="#6aa6e0"/><path d="M2.4 0 V2 M7.6 0 V2 M5 0 V2" stroke="#3a78b8" stroke-width="0.6"/></svg>
<div class="t" style="left:568.00px;top:62.70px;font-size:7.60px;color:#53504e;transform:scaleX(0.8920);transform-origin:0 0;">Formatar</div>
<svg class="a" style="left:596.30px;top:63.60px;" width="6" height="6" viewBox="0 0 6 6"><path d="M1.6 2.3 L3 3.7 L4.4 2.3" fill="none" stroke="#555" stroke-width="0.85"/></svg>
<svg class="a" style="left:618.00px;top:34.60px;" width="9" height="9" viewBox="0 0 9 9"><path d="M8 1.6 V0.5 H0.8 L4.6 4.4 L0.8 8.3 H8 V7.2" fill="none" stroke="#555" stroke-width="0.8"/></svg>
<svg class="a" style="left:629.50px;top:36.40px;" width="6" height="6" viewBox="0 0 6 6"><path d="M1.6 2.3 L3 3.7 L4.4 2.3" fill="none" stroke="#555" stroke-width="0.85"/></svg>
<svg class="a" style="left:617.00px;top:48.00px;" width="10" height="9" viewBox="0 0 10 9"><rect x="0.5" y="0.5" width="8.5" height="8" fill="#fff" stroke="#666" stroke-width="0.7"/><rect x="0.9" y="0.9" width="7.7" height="1.6" fill="#cfe2f5"/><path d="M4.75 2.8 V7 M3.2 5.4 L4.75 7.2 L6.3 5.4" fill="none" stroke="#3a78b8" stroke-width="0.7"/></svg>
<svg class="a" style="left:628.00px;top:49.80px;" width="6" height="6" viewBox="0 0 6 6"><path d="M1.6 2.3 L3 3.7 L4.4 2.3" fill="none" stroke="#555" stroke-width="0.85"/></svg>
<svg class="a" style="left:617.00px;top:61.50px;" width="10" height="9" viewBox="0 0 10 9"><path d="M5.6 0.6 L9.2 3.6 L4.6 8.6 L1 5.6 Z" fill="#fff" stroke="#a24ab8" stroke-width="0.7"/><path d="M5.6 0.6 L9.2 3.6 L6.6 6.4 L3 3.4 Z" fill="#b86ad0"/></svg>
<svg class="a" style="left:628.00px;top:63.20px;" width="6" height="6" viewBox="0 0 6 6"><path d="M1.6 2.3 L3 3.7 L4.4 2.3" fill="none" stroke="#555" stroke-width="0.85"/></svg>
<div class="t" style="left:646.60px;top:34.90px;font-size:9.40px;color:#3a86c8;transform:scaleX(1.0207);transform-origin:0 0;">A</div>
<div class="t" style="left:647.00px;top:42.90px;font-size:9.40px;color:#444;transform:scaleX(0.9753);transform-origin:0 0;">Z</div>
<svg class="a" style="left:654.00px;top:39.00px;" width="9.4" height="10" viewBox="0 0 9.4 10"><path d="M0.5 0.6 H8.9 L5.7 4.6 V9 L3.7 7.6 V4.6 Z" fill="none" stroke="#444" stroke-width="0.85"/></svg>
<div class="t" style="left:639.00px;top:56.10px;font-size:7.60px;color:#53504e;transform:scaleX(0.8844);transform-origin:0 0;">Classificar</div>
<div class="t" style="left:640.00px;top:64.85px;font-size:7.60px;color:#53504e;transform:scaleX(0.9123);transform-origin:0 0;">e Filtrar</div>
<svg class="a" style="left:663.80px;top:65.80px;" width="6" height="6" viewBox="0 0 6 6"><path d="M1.6 2.3 L3 3.7 L4.4 2.3" fill="none" stroke="#555" stroke-width="0.85"/></svg>
<svg class="a" style="left:684.00px;top:35.00px;" width="18" height="18" viewBox="0 0 18 18"><circle cx="10.6" cy="6.6" r="6.1" fill="none" stroke="#555" stroke-width="0.8"/><path d="M6.2 10.9 L-0.2 16.8" stroke="#555" stroke-width="0.9"/></svg>
<div class="t" style="left:676.00px;top:56.10px;font-size:7.60px;color:#53504e;transform:scaleX(0.8706);transform-origin:0 0;">Localizar e</div>
<div class="t" style="left:673.00px;top:64.85px;font-size:7.60px;color:#53504e;transform:scaleX(0.8966);transform-origin:0 0;">Selecionar</div>
<svg class="a" style="left:705.40px;top:65.80px;" width="6" height="6" viewBox="0 0 6 6"><path d="M1.6 2.3 L3 3.7 L4.4 2.3" fill="none" stroke="#555" stroke-width="0.85"/></svg>
<div class="a" style="left:729.00px;top:35.00px;width:18.00px;height:17.00px;background:#fff;border-radius:1.5px;"></div>
<svg class="a" style="left:731.60px;top:37.80px;" width="13" height="11.2" viewBox="0 0 26 22"><path d="M3 0.6 H23 C23.6 0.6,24 0.9,24.2 1.4 L26 7.6 C26.2 8.4,25.7 9,25 9 H23.6 V18 C23.6 20.2,22.2 21.4,20.2 21.4 H5.8 C3.8 21.4,2.4 20.2,2.4 18 V9 H1 C0.3 9,-0.2 8.4,0 7.6 L1.8 1.4 C2 0.9,2.4 0.6,3 0.6 Z" fill="#3d4be6"/><path d="M6 4.6 H20 V9.4 C20 10,19.6 10.4,19 10.4 H16 V15 C16 15.8,15.6 16.2,14.8 16.2 H11.2 C10.4 16.2,10 15.8,10 15 V10.4 H7 C6.4 10.4,6 10,6 9.4 Z" fill="#ffffff"/></svg>
<div class="t" style="left:723.75px;top:56.10px;font-size:7.60px;color:#53504e;transform:scaleX(0.8721);transform-origin:0 0;">Salvar no</div>
<div class="t" style="left:726.00px;top:64.85px;font-size:7.60px;color:#53504e;transform:scaleX(0.8249);transform-origin:0 0;">TeraBox</div>
<div class="a" style="left:0.00px;top:93.90px;width:60.00px;height:13.80px;background:#fff;"></div>
<div class="t" style="left:5.00px;top:96.90px;font-size:8.20px;color:#444;transform:scaleX(0.8509);transform-origin:0 0;">C12</div>
<svg class="a" style="left:51.50px;top:99.50px;" width="6" height="4" viewBox="0 0 6 4"><path d="M1 0.8 L3 3 L5 0.8 Z" fill="#666"/></svg>
<div class="a" style="left:68.80px;top:97.00px;width:0.80px;height:1.00px;background:#aaa;"></div>
<div class="a" style="left:68.80px;top:100.50px;width:0.80px;height:1.00px;background:#aaa;"></div>
<div class="a" style="left:68.80px;top:104.00px;width:0.80px;height:1.00px;background:#aaa;"></div>
<div class="a" style="left:78.00px;top:93.90px;width:64.50px;height:13.80px;background:#fff;"></div>
<svg class="a" style="left:85.50px;top:98.00px;" width="7" height="7" viewBox="0 0 7 7"><path d="M0.8 0.8 L6.2 6.2 M6.2 0.8 L0.8 6.2" stroke="#c4c4c4" stroke-width="0.8"/></svg>
<svg class="a" style="left:106.50px;top:98.00px;" width="8" height="7" viewBox="0 0 8 7"><path d="M0.8 3.8 L3 6 L7.2 0.8" fill="none" stroke="#c4c4c4" stroke-width="0.8"/></svg>
<div class="t" style="left:128.50px;top:97.20px;font-size:8.40px;color:#555;transform:scaleX(1.0713);transform-origin:0 0;font-style:italic;font-family:'Liberation Serif',serif;">f</div>
<div class="t" style="left:131.20px;top:100.90px;font-size:5.00px;color:#555;transform:scaleX(0.9600);transform-origin:0 0;font-style:italic;font-family:'Liberation Serif',serif;">x</div>
<div class="a" style="left:144.50px;top:93.90px;width:652.00px;height:13.80px;background:#fff;"></div>
<svg class="a" style="left:788.80px;top:98.00px;" width="6" height="6" viewBox="0 0 6 6"><path d="M1.3 2.15 L3 3.85 L4.7 2.15" fill="none" stroke="#666" stroke-width="0.8"/></svg>
<svg class="a" style="left:19.00px;top:120.20px;" width="11" height="9" viewBox="0 0 11 9"><path d="M4.2 1.2 L9.8 0.8 L7.2 7.4 L1 8 Z" fill="none" stroke="#ececec" stroke-width="1.1" stroke-linejoin="round"/><path d="M4.2 1.2 L6.4 3.2 L9.8 0.8" fill="none" stroke="#ececec" stroke-width="0.7"/></svg>
<div class="t" style="left:33.75px;top:122.20px;font-size:7.60px;color:#f2f2f2;transform:scaleX(1.1604);transform-origin:0 0;font-weight:bold;">PAPEL</div>
<div class="t" style="left:8.75px;top:131.60px;font-size:7.60px;color:#f2f2f2;transform:scaleX(1.1526);transform-origin:0 0;font-weight:bold;">DE TRABALHO</div>
<div class="a" style="left:84.10px;top:117.50px;width:0.90px;height:20.00px;background:#b8b8b8;"></div>
<div class="t" style="left:99.25px;top:124.70px;font-size:8.60px;color:#ffffff;transform:scaleX(0.9236);transform-origin:0 0;-webkit-text-stroke:0.18px #fff;">Página Inicial</div>
<div class="t" style="left:160.50px;top:124.70px;font-size:8.60px;color:#ffffff;transform:scaleX(0.9317);transform-origin:0 0;-webkit-text-stroke:0.18px #fff;">Planejamento</div>
<div class="t" style="left:223.25px;top:124.70px;font-size:8.60px;color:#ffffff;transform:scaleX(0.9652);transform-origin:0 0;-webkit-text-stroke:0.18px #fff;">Conteúdo</div>
<div class="t" style="left:272.50px;top:124.70px;font-size:8.60px;color:#ffffff;transform:scaleX(0.9154);transform-origin:0 0;-webkit-text-stroke:0.18px #fff;">Registros</div>
<div class="t" style="left:319.50px;top:124.70px;font-size:8.60px;color:#ffffff;transform:scaleX(0.8913);transform-origin:0 0;-webkit-text-stroke:0.18px #fff;">Legislação Seca</div>
<div class="t" style="left:390.00px;top:124.70px;font-size:8.60px;color:#ffffff;transform:scaleX(0.9012);transform-origin:0 0;-webkit-text-stroke:0.18px #fff;">Revisão</div>
<div class="t" style="left:432.50px;top:124.70px;font-size:8.60px;color:#ffffff;transform:scaleX(0.9566);transform-origin:0 0;-webkit-text-stroke:0.18px #fff;">Histórico</div>
<div class="t" style="left:478.75px;top:124.70px;font-size:8.60px;color:#ffffff;transform:scaleX(0.9339);transform-origin:0 0;-webkit-text-stroke:0.18px #fff;">Simulados</div>
<div class="t" style="left:530.00px;top:124.70px;font-size:8.60px;color:#ffffff;transform:scaleX(0.9122);transform-origin:0 0;-webkit-text-stroke:0.18px #fff;">Resultados</div>
<div class="t" style="left:581.75px;top:124.70px;font-size:8.60px;color:#ffffff;transform:scaleX(0.9289);transform-origin:0 0;-webkit-text-stroke:0.18px #fff;">Anotações</div>
<div class="t" style="left:13.00px;top:152.60px;font-size:8.00px;color:#4a7ebb;transform:scaleX(0.9735);transform-origin:0 0;">Resumo</div>
<div class="a" style="left:35.75px;top:176.20px;width:201.25px;height:28.40px;background:#fff;border:0.6px solid #d4d4d4;"></div>
<div class="a" style="left:98.00px;top:190.20px;width:139.00px;height:0.70px;background:#d4d4d4;"></div>
<div class="a" style="left:35.75px;top:176.30px;width:62.50px;height:13.90px;background:#366092;"></div>
<div class="a" style="left:35.75px;top:191.10px;width:62.50px;height:13.40px;background:#366092;"></div>
<div class="t" style="left:52.00px;top:179.60px;font-size:8.60px;color:#fff;transform:scaleX(0.7474);transform-origin:0 0;font-weight:bold;-webkit-text-stroke:0.2px #fff;">Concurso</div>
<div class="t" style="left:57.50px;top:193.80px;font-size:8.60px;color:#fff;transform:scaleX(0.7546);transform-origin:0 0;font-weight:bold;-webkit-text-stroke:0.2px #fff;">Cargo</div>
<div class="a" style="left:347.50px;top:176.20px;width:125.30px;height:28.40px;background:#fff;border:0.6px solid #d4d4d4;"></div>
<div class="a" style="left:423.00px;top:190.20px;width:49.80px;height:0.70px;background:#d4d4d4;"></div>
<div class="a" style="left:347.50px;top:176.30px;width:75.50px;height:13.90px;background:#366092;"></div>
<div class="a" style="left:347.50px;top:191.10px;width:75.50px;height:13.40px;background:#366092;"></div>
<div class="t" style="left:357.00px;top:179.60px;font-size:8.60px;color:#fff;transform:scaleX(0.7429);transform-origin:0 0;font-weight:bold;-webkit-text-stroke:0.2px #fff;">Início dos Estudos</div>
<div class="t" style="left:363.40px;top:193.80px;font-size:8.60px;color:#fff;transform:scaleX(0.7811);transform-origin:0 0;font-weight:bold;-webkit-text-stroke:0.2px #fff;">Data da Prova</div>
<div class="a" style="left:531.00px;top:178.00px;width:52.75px;height:39.40px;background:#365f91;"></div>
<div class="a" style="left:585.75px;top:178.00px;width:69.25px;height:39.40px;background:#c9002f;"></div>
<div class="a" style="left:692.00px;top:170.50px;width:53.00px;height:49.00px;background:#558ed5;"></div>
<div class="t" style="left:702.50px;top:173.70px;font-size:7.20px;color:#fff;transform:scaleX(0.9228);transform-origin:0 0;">Tela Inteira</div>
<div class="a" style="left:696.00px;top:185.00px;width:42.75px;height:12.00px;background:#5890d6;box-shadow:0.8px 1px 1.2px rgba(30,50,90,0.55);"></div>
<div class="a" style="left:696.00px;top:202.00px;width:42.75px;height:12.50px;background:#5890d6;box-shadow:0.8px 1px 1.2px rgba(30,50,90,0.55);"></div>
<div class="t" style="left:709.50px;top:186.60px;font-size:7.20px;color:#fff;transform:scaleX(0.9101);transform-origin:0 0;">Ativar</div>
<div class="t" style="left:704.50px;top:203.60px;font-size:7.20px;color:#fff;transform:scaleX(0.8961);transform-origin:0 0;">Desativar</div>
<div class="a" style="left:35.75px;top:232.50px;width:13.55px;height:22.00px;background:#366092;"></div>
<div class="a" style="left:50.80px;top:232.50px;width:184.90px;height:22.00px;background:#366092;"></div>
<div class="a" style="left:237.30px;top:232.50px;width:25.70px;height:22.00px;background:#366092;"></div>
<div class="a" style="left:264.60px;top:232.50px;width:40.20px;height:22.00px;background:#366092;"></div>
<div class="a" style="left:306.40px;top:232.50px;width:39.80px;height:22.00px;background:#366092;"></div>
<div class="a" style="left:347.80px;top:232.50px;width:30.60px;height:22.00px;background:#366092;"></div>
<div class="a" style="left:379.90px;top:232.50px;width:42.70px;height:22.00px;background:#366092;"></div>
<div class="a" style="left:424.30px;top:232.50px;width:47.10px;height:22.00px;background:#366092;"></div>
<div class="a" style="left:473.00px;top:232.50px;width:55.90px;height:22.00px;background:#366092;"></div>
<div class="a" style="left:530.40px;top:232.50px;width:53.50px;height:22.00px;background:#366092;"></div>
<div class="t" style="left:38.75px;top:239.80px;font-size:8.60px;color:#fff;transform:scaleX(0.8822);transform-origin:0 0;font-weight:bold;-webkit-text-stroke:0.2px #fff;">Nº</div>
<div class="t" style="left:128.00px;top:239.80px;font-size:8.60px;color:#fff;transform:scaleX(0.8668);transform-origin:0 0;font-weight:bold;-webkit-text-stroke:0.2px #fff;">Matérias</div>
<div class="t" style="left:241.75px;top:239.80px;font-size:8.60px;color:#fff;transform:scaleX(0.7905);transform-origin:0 0;font-weight:bold;-webkit-text-stroke:0.2px #fff;">Peso</div>
<div class="t" style="left:272.50px;top:234.80px;font-size:8.60px;color:#fff;transform:scaleX(0.8997);transform-origin:0 0;font-weight:bold;-webkit-text-stroke:0.2px #fff;">Qtd de</div>
<div class="t" style="left:268.00px;top:245.60px;font-size:8.60px;color:#fff;transform:scaleX(0.8484);transform-origin:0 0;font-weight:bold;-webkit-text-stroke:0.2px #fff;">Questões</div>
<div class="t" style="left:314.50px;top:234.80px;font-size:8.60px;color:#fff;transform:scaleX(0.8905);transform-origin:0 0;font-weight:bold;-webkit-text-stroke:0.2px #fff;">Qtd de</div>
<div class="t" style="left:310.25px;top:245.60px;font-size:8.60px;color:#fff;transform:scaleX(0.8358);transform-origin:0 0;font-weight:bold;-webkit-text-stroke:0.2px #fff;">Assuntos</div>
<div class="t" style="left:353.75px;top:239.80px;font-size:8.60px;color:#fff;transform:scaleX(0.9122);transform-origin:0 0;font-weight:bold;-webkit-text-stroke:0.2px #fff;">Nível</div>
<div class="t" style="left:385.00px;top:234.80px;font-size:8.60px;color:#fff;transform:scaleX(0.8695);transform-origin:0 0;font-weight:bold;-webkit-text-stroke:0.2px #fff;">Horas de</div>
<div class="t" style="left:387.00px;top:245.60px;font-size:8.60px;color:#fff;transform:scaleX(0.8253);transform-origin:0 0;font-weight:bold;-webkit-text-stroke:0.2px #fff;">Estudos</div>
<div class="t" style="left:433.25px;top:234.80px;font-size:8.60px;color:#fff;transform:scaleX(0.9047);transform-origin:0 0;font-weight:bold;-webkit-text-stroke:0.2px #fff;">Total de</div>
<div class="t" style="left:435.50px;top:245.60px;font-size:8.60px;color:#fff;transform:scaleX(0.8578);transform-origin:0 0;font-weight:bold;-webkit-text-stroke:0.2px #fff;">Pontos</div>
<div class="t" style="left:480.00px;top:234.80px;font-size:8.60px;color:#fff;transform:scaleX(0.8407);transform-origin:0 0;font-weight:bold;-webkit-text-stroke:0.2px #fff;">Participação</div>
<div class="t" style="left:480.50px;top:245.60px;font-size:8.60px;color:#fff;transform:scaleX(0.9046);transform-origin:0 0;font-weight:bold;-webkit-text-stroke:0.2px #fff;">Matéria (%)</div>
<div class="t" style="left:532.50px;top:234.80px;font-size:8.60px;color:#fff;transform:scaleX(0.8659);transform-origin:0 0;font-weight:bold;-webkit-text-stroke:0.2px #fff;">Carga Horária</div>
<div class="t" style="left:536.25px;top:245.60px;font-size:8.60px;color:#fff;transform:scaleX(0.9060);transform-origin:0 0;font-weight:bold;-webkit-text-stroke:0.2px #fff;">por Matéria</div>
<div class="a" style="left:585.00px;top:232.50px;width:160.75px;height:22.00px;background:#b8002f;background:linear-gradient(#d8004a 0%,#c4003a 45%,#9e0028 100%);"></div>
<div class="t" style="left:649.00px;top:235.50px;font-size:15.40px;color:#fff;transform:scaleX(1.0876);transform-origin:0 0;font-weight:bold;">0,00</div>
<div class="a" style="left:35.50px;top:255.00px;width:14.50px;height:137.00px;background:#f2f2f2;"></div>
<div class="a" style="left:305.50px;top:255.00px;width:41.80px;height:137.00px;background:#f2f2f2;"></div>
<div class="a" style="left:423.50px;top:255.00px;width:48.70px;height:137.00px;background:#f2f2f2;"></div>
<div class="a" style="left:472.20px;top:255.00px;width:57.30px;height:137.00px;background:#f2f2f2;"></div>
<div class="a" style="left:529.50px;top:255.00px;width:55.00px;height:137.00px;background:#f2f2f2;"></div>
<div class="a" style="left:35.00px;top:255.00px;width:1.00px;height:137.00px;background:#d8d8d8;"></div>
<div class="a" style="left:50.00px;top:255.00px;width:1.00px;height:137.00px;background:#d8d8d8;"></div>
<div class="a" style="left:236.00px;top:255.00px;width:1.00px;height:137.00px;background:#d8d8d8;"></div>
<div class="a" style="left:264.00px;top:255.00px;width:1.00px;height:137.00px;background:#d8d8d8;"></div>
<div class="a" style="left:305.00px;top:255.00px;width:1.00px;height:137.00px;background:#d8d8d8;"></div>
<div class="a" style="left:347.00px;top:255.00px;width:1.00px;height:137.00px;background:#d8d8d8;"></div>
<div class="a" style="left:379.00px;top:255.00px;width:1.00px;height:137.00px;background:#d8d8d8;"></div>
<div class="a" style="left:423.00px;top:255.00px;width:1.00px;height:137.00px;background:#d8d8d8;"></div>
<div class="a" style="left:472.00px;top:255.00px;width:1.00px;height:137.00px;background:#d8d8d8;"></div>
<div class="a" style="left:529.00px;top:255.00px;width:1.00px;height:137.00px;background:#d8d8d8;"></div>
<div class="a" style="left:584.00px;top:255.00px;width:1.00px;height:137.00px;background:#d8d8d8;"></div>
<div class="a" style="left:35.50px;top:255.00px;width:549.00px;height:1.00px;background:#d8d8d8;"></div>
<div class="a" style="left:35.50px;top:269.00px;width:549.00px;height:1.00px;background:#d8d8d8;"></div>
<div class="a" style="left:35.50px;top:283.00px;width:549.00px;height:1.00px;background:#d8d8d8;"></div>
<div class="a" style="left:35.50px;top:297.00px;width:549.00px;height:1.00px;background:#d8d8d8;"></div>
<div class="a" style="left:35.50px;top:311.00px;width:549.00px;height:1.00px;background:#d8d8d8;"></div>
<div class="a" style="left:35.50px;top:325.00px;width:549.00px;height:1.00px;background:#d8d8d8;"></div>
<div class="a" style="left:35.50px;top:339.00px;width:549.00px;height:1.00px;background:#d8d8d8;"></div>
<div class="a" style="left:35.50px;top:353.00px;width:549.00px;height:1.00px;background:#d8d8d8;"></div>
<div class="a" style="left:35.50px;top:367.00px;width:549.00px;height:1.00px;background:#d8d8d8;"></div>
<div class="a" style="left:35.50px;top:381.00px;width:549.00px;height:1.00px;background:#d8d8d8;"></div>
<div class="t" style="left:40.90px;top:258.50px;font-size:7.80px;color:#111;transform:scaleX(0.8298);transform-origin:0 0;font-weight:bold;">1</div>
<div class="t" style="left:40.90px;top:272.50px;font-size:7.80px;color:#111;transform:scaleX(0.8298);transform-origin:0 0;font-weight:bold;">2</div>
<div class="t" style="left:40.90px;top:286.50px;font-size:7.80px;color:#111;transform:scaleX(0.8298);transform-origin:0 0;font-weight:bold;">3</div>
<div class="t" style="left:40.90px;top:300.50px;font-size:7.80px;color:#111;transform:scaleX(0.8298);transform-origin:0 0;font-weight:bold;">4</div>
<div class="t" style="left:40.90px;top:314.50px;font-size:7.80px;color:#111;transform:scaleX(0.8298);transform-origin:0 0;font-weight:bold;">5</div>
<div class="t" style="left:40.90px;top:328.50px;font-size:7.80px;color:#111;transform:scaleX(0.8298);transform-origin:0 0;font-weight:bold;">6</div>
<div class="t" style="left:40.90px;top:342.50px;font-size:7.80px;color:#111;transform:scaleX(0.8298);transform-origin:0 0;font-weight:bold;">7</div>
<div class="t" style="left:40.90px;top:356.50px;font-size:7.80px;color:#111;transform:scaleX(0.8298);transform-origin:0 0;font-weight:bold;">8</div>
<div class="t" style="left:40.90px;top:370.50px;font-size:7.80px;color:#111;transform:scaleX(0.8298);transform-origin:0 0;font-weight:bold;">9</div>
<div class="t" style="left:38.70px;top:384.50px;font-size:7.80px;color:#111;transform:scaleX(0.9221);transform-origin:0 0;font-weight:bold;">10</div>
<div class="t" style="left:356.00px;top:258.70px;font-size:7.40px;color:#666;transform:scaleX(0.9600);transform-origin:0 0;">Fácil</div>
<div class="a" style="left:584.60px;top:256.60px;width:161.40px;height:136.40px;background:#fff;border:0.7px solid #dedede;"></div>
<div class="t" style="left:607.50px;top:265.40px;font-size:7.20px;color:#404040;transform:scaleX(0.9995);transform-origin:0 0;">IMPORTÂNCIA DE CADA MATÉRIA</div>
<div class="t" style="left:661.00px;top:275.10px;font-size:5.60px;color:#c8823a;transform:scaleX(1.2355);transform-origin:0 0;">0%</div>
<div class="a" style="left:608.30px;top:385.40px;width:4.60px;height:4.60px;background:#4f81bd;"></div>
<div class="t" style="left:614.80px;top:384.20px;font-size:7.20px;color:#595959;transform:scaleX(0.8990);transform-origin:0 0;">1</div>
<div class="a" style="left:623.30px;top:385.40px;width:4.60px;height:4.60px;background:#c0504d;"></div>
<div class="t" style="left:629.80px;top:384.20px;font-size:7.20px;color:#595959;transform:scaleX(0.8990);transform-origin:0 0;">2</div>
<div class="a" style="left:638.30px;top:385.40px;width:4.60px;height:4.60px;background:#9bbb59;"></div>
<div class="t" style="left:644.80px;top:384.20px;font-size:7.20px;color:#595959;transform:scaleX(0.8990);transform-origin:0 0;">3</div>
<div class="a" style="left:653.30px;top:385.40px;width:4.60px;height:4.60px;background:#8064a2;"></div>
<div class="t" style="left:659.80px;top:384.20px;font-size:7.20px;color:#595959;transform:scaleX(0.8990);transform-origin:0 0;">4</div>
<div class="a" style="left:668.30px;top:385.40px;width:4.60px;height:4.60px;background:#4bacc6;"></div>
<div class="t" style="left:674.80px;top:384.20px;font-size:7.20px;color:#595959;transform:scaleX(0.8990);transform-origin:0 0;">5</div>
<div class="a" style="left:683.30px;top:385.40px;width:4.60px;height:4.60px;background:#f79646;"></div>
<div class="t" style="left:689.80px;top:384.20px;font-size:7.20px;color:#595959;transform:scaleX(0.8990);transform-origin:0 0;">6</div>
<div class="a" style="left:698.30px;top:385.40px;width:4.60px;height:4.60px;background:#2c4d75;"></div>
<div class="t" style="left:704.80px;top:384.20px;font-size:7.20px;color:#595959;transform:scaleX(0.8990);transform-origin:0 0;">7</div>
<div class="a" style="left:713.30px;top:385.40px;width:4.60px;height:4.60px;background:#772c2a;"></div>
<div class="t" style="left:719.80px;top:384.20px;font-size:7.20px;color:#595959;transform:scaleX(0.8990);transform-origin:0 0;">8</div>
<div class="a" style="left:0.00px;top:391.20px;width:800.00px;height:16.80px;background:#e4e4e4;"></div>
<div class="a" style="left:0.00px;top:391.00px;width:787.00px;height:0.80px;background:#c8c8c8;"></div>
<div class="a" style="left:0.00px;top:404.60px;width:800.00px;height:3.40px;background:#f0f0f0;"></div>
<div class="a" style="left:7.50px;top:395.50px;width:642.00px;height:7.50px;background:#fff;"></div>
<svg class="a" style="left:1.50px;top:396.50px;" width="5" height="6" viewBox="0 0 5 6"><path d="M3.6 0.8 L1.2 3 L3.6 5.2 Z" fill="#555"/></svg>
<div class="a" style="left:780.00px;top:395.50px;width:7.00px;height:7.50px;background:#fff;"></div>
<svg class="a" style="left:781.00px;top:396.50px;" width="5" height="6" viewBox="0 0 5 6"><path d="M1.6 0.8 L4 3 L1.6 5.2 Z" fill="#555"/></svg>
<div class="a" style="left:786.60px;top:114.70px;width:13.40px;height:276.50px;background:#e8e8e8;"></div>
<div class="a" style="left:786.60px;top:114.70px;width:0.80px;height:276.50px;background:#cfcfcf;"></div>
<div class="a" style="left:789.40px;top:115.30px;width:8.60px;height:8.70px;background:#fff;"></div>
<svg class="a" style="left:790.80px;top:117.40px;" width="6" height="5" viewBox="0 0 6 5"><path d="M0.8 3.8 L3 1.4 L5.2 3.8 Z" fill="#555"/></svg>
<div class="a" style="left:789.50px;top:130.60px;width:7.70px;height:114.40px;background:#fff;"></div>
<div class="a" style="left:789.40px;top:381.00px;width:8.60px;height:9.00px;background:#fff;"></div>
<svg class="a" style="left:790.80px;top:383.20px;" width="6" height="5" viewBox="0 0 6 5"><path d="M0.8 1.2 L3 3.6 L5.2 1.2 Z" fill="#555"/></svg>
<div class="a" style="left:760.00px;top:196.10px;width:40.00px;height:19.80px;background:#dce9ff;"></div>
<div class="a" style="left:746.9px;top:196.1px;width:23px;height:19.8px;background:#1b6ff2;border-radius:3.5px 0 0 3.5px;"></div>
<svg class="a" style="left:751.80px;top:201.00px;" width="12.9" height="10.8" viewBox="0 0 26 22"><path d="M3 0.6 H23 C23.6 0.6,24 0.9,24.2 1.4 L26 7.6 C26.2 8.4,25.7 9,25 9 H23.6 V18 C23.6 20.2,22.2 21.4,20.2 21.4 H5.8 C3.8 21.4,2.4 20.2,2.4 18 V9 H1 C0.3 9,-0.2 8.4,0 7.6 L1.8 1.4 C2 0.9,2.4 0.6,3 0.6 Z" fill="#ffffff"/><path d="M6 4.6 H20 V9.4 C20 10,19.6 10.4,19 10.4 H16 V15 C16 15.8,15.6 16.2,14.8 16.2 H11.2 C10.4 16.2,10 15.8,10 15 V10.4 H7 C6.4 10.4,6 10,6 9.4 Z" fill="#1b6ff2"/></svg>
<div class="t" style="left:776.90px;top:202.70px;font-size:8.20px;color:#2a62d8;transform:scaleX(1.1023);transform-origin:0 0;font-weight:bold;">TeraBox</div>
</body>
</html>
